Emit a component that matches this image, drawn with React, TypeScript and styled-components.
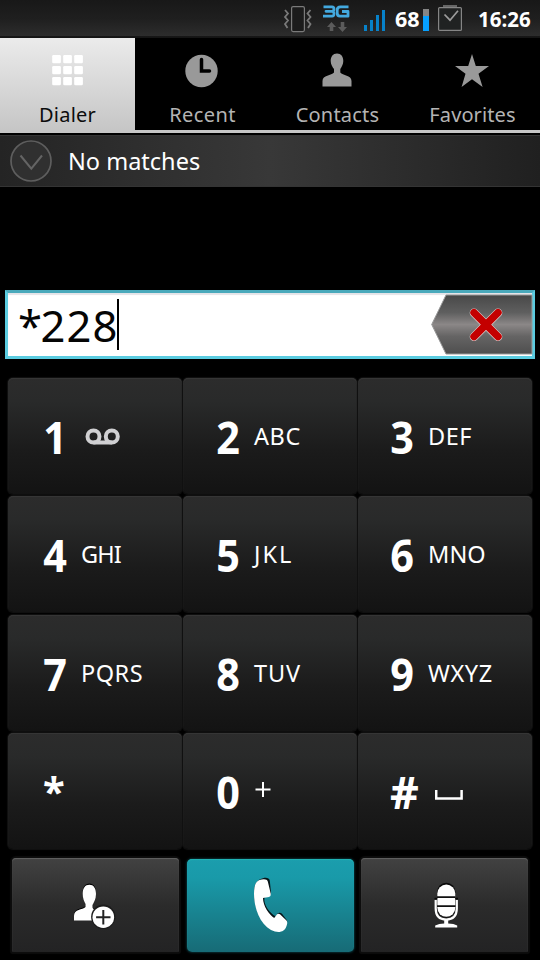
import React from 'react';
import styled, { createGlobalStyle } from 'styled-components';

const Global = createGlobalStyle`
  * { box-sizing: border-box; }
  html, body { margin: 0; padding: 0; background: #000; }
  body { font-family: "Noto Sans", "Open Sans", sans-serif; }
  button { font-family: inherit; }
`;

const Screen = styled.div`
  width: 540px;
  height: 960px;
  overflow: hidden;
  background: #000;
  display: flex;
  flex-direction: column;
`;

const StatusBar = styled.header`
  height: 38px;
  flex: none;
  display: flex;
  align-items: flex-start;
  justify-content: flex-end;
  padding-right: 8px;
  background: linear-gradient(#181818, #1f1f1f 50%, #2d2d2d 36px, #000 37px, #2a2a2a 38px);
`;

const StatusIcon = styled.svg<{ $gap: number }>`
  display: block;
  flex: none;
  margin-right: ${(p) => p.$gap}px;
`;

const StatusText = styled.span<{ $width: number; $size: number; $spacing: number }>`
  width: ${(p) => p.$width}px;
  font-size: ${(p) => p.$size}px;
  letter-spacing: ${(p) => p.$spacing}px;
  font-weight: 700;
  line-height: 38px;
  white-space: nowrap;
  color: #fff;
`;

const Tabs = styled.nav`
  height: 95px;
  flex: none;
  display: grid;
  grid-template-columns: repeat(4, 135px);
`;

const Tab = styled.button<{ $active?: boolean }>`
  border: 0;
  padding: 0;
  display: flex;
  flex-direction: column;
  align-items: center;
  border-bottom: 3px solid #c6c6c6;
  background: ${(p) => (p.$active ? 'linear-gradient(#ebebeb, #c6c6c6)' : '#000')};
  color: ${(p) => (p.$active ? '#0c0c0c' : '#b4b4b4')};
`;

const TabIcon = styled.svg`
  display: block;
  margin-top: 12px;
  flex: none;
`;

const TabLabel = styled.span<{ $spacing: number }>`
  font-size: 20px;
  line-height: 26px;
  margin-top: 12px;
  letter-spacing: ${(p) => p.$spacing}px;
`;

const MatchBar = styled.section`
  height: 52px;
  margin-top: 2px;
  flex: none;
  display: flex;
  align-items: center;
  padding-left: 10px;
  border-top: 1px solid #343434;
  border-bottom: 1px solid #343434;
  background: linear-gradient(90deg, #242424, #383838 50%, #202020);
`;

const MatchText = styled.span`
  margin-left: 16px;
  color: #fff;
  font-size: 23.5px;
  line-height: 30px;
`;

const NumberField = styled.div`
  width: 530px;
  height: 69px;
  margin: 103px 0 0 5px;
  flex: none;
  display: flex;
  align-items: center;
  justify-content: space-between;
  border: 3px solid #5bcce0;
  border-top-color: #4aa9bb;
  background: #fff;
  box-shadow: inset 0 2px 1px #e4e4e8;
`;

const NumberText = styled.div`
  display: flex;
  align-items: center;
  padding-left: 10px;
  font-size: 43.5px;
  letter-spacing: 1.2px;
  line-height: 60px;
  color: #050505;
`;

const Star = styled.span`
  letter-spacing: -1.6px;
`;

const Caret = styled.span`
  width: 2px;
  height: 51px;
  margin-left: -1.5px;
  margin-top: 0;
  background: #000;
`;

const Backspace = styled.svg`
  display: block;
  margin-right: -1px;
`;

const Keypad = styled.main`
  width: 524px;
  margin: 19px 0 0 8px;
  flex: none;
  display: grid;
  grid-template-columns: repeat(3, 174px);
  grid-template-rows: repeat(4, 116px);
  column-gap: 1px;
  row-gap: 2.4px;
`;

const Key = styled.button<{ $pad: number }>`
  border: 0;
  padding: 0 0 0 ${(p) => p.$pad}px;
  display: flex;
  align-items: center;
  border-radius: 5px;
  background: linear-gradient(#2c2c2c, #292a2a 20%, #1b1b1b 62%, #131313);
  box-shadow: inset 0 1px 1px #373737, 0 0 1px 1px #111;
  color: #fff;
  text-align: left;
`;

const Digit = styled.span<{ $narrow: number }>`
  width: 38px;
  flex: none;
  font-size: 45.5px;
  font-weight: 700;
  line-height: 60px;
  transform: scaleX(${(p) => p.$narrow});
  transform-origin: 3px 50%;
`;

const Asterisk = styled.span`
  width: 38px;
  flex: none;
  font-size: 40px;
  font-weight: 700;
  line-height: 60px;
`;

const Letters = styled.span<{ $spacing?: number }>`
  font-size: 23.5px;
  line-height: 32px;
  letter-spacing: ${(p) => p.$spacing ?? 0}px;
`;

const KeySymbol = styled.svg<{ $top?: number; $left?: number }>`
  display: block;
  margin-top: ${(p) => p.$top ?? 0}px;
  margin-left: ${(p) => p.$left ?? 0}px;
`;

const Actions = styled.footer`
  display: flex;
  gap: 7.5px;
  margin: 9px 0 0 12px;
  flex: none;
`;

const Action = styled.button<{ $call?: boolean }>`
  width: 167px;
  height: ${(p) => (p.$call ? 93 : 94)}px;
  margin-top: ${(p) => (p.$call ? 1 : 0)}px;
  padding: 0;
  border: 0;
  border-radius: ${(p) => (p.$call ? '5px' : '4px 4px 1px 1px')};
  display: flex;
  justify-content: center;
  background: ${(p) =>
    p.$call
      ? 'linear-gradient(#1b9dad, #199aa9 20%, #176b76)'
      : 'linear-gradient(#424242, #2b2b2b 50%, #232324)'};
  box-shadow: ${(p) =>
    p.$call ? 'inset 0 1px 1px #20b5b5, 0 0 2px 1px #092b30' : 'inset 0 1px 1px #626262, 0 0 1px 2px #0d0d0d'};
`;

const ActionIcon = styled.svg`
  display: block;
`;

const keys: { digit: string; letters?: string; spacing?: number }[] = [
  { digit: '1' }, { digit: '2', letters: 'ABC', spacing: 0.6 }, { digit: '3', letters: 'DEF', spacing: 0.5 },
  { digit: '4', letters: 'GHI', spacing: -0.9 }, { digit: '5', letters: 'JKL', spacing: 2 }, { digit: '6', letters: 'MNO', spacing: 0.1 },
  { digit: '7', letters: 'PQRS', spacing: 0.5 }, { digit: '8', letters: 'TUV', spacing: 0.9 }, { digit: '9', letters: 'WXYZ', spacing: 0.6 },
  { digit: '*' }, { digit: '0' }, { digit: '#' },
];

const columnPad = [35, 33, 32];

function KeyExtra({ digit }: { digit: string }) {
  if (digit === '1') {
    return (
      <KeySymbol width="36" height="18" viewBox="0 0 36 18" $left={4} $top={1}>
        <g fill="none" stroke="#d0d0d2" strokeWidth="4">
          <circle cx="8.5" cy="8.5" r="6" />
          <circle cx="26.8" cy="8.5" r="6" />
          <path d="M8.5 14.5H26.8" />
        </g>
      </KeySymbol>
    );
  }
  if (digit === '0') {
    return (
      <KeySymbol width="16" height="16" viewBox="0 0 16 16" $left={0.5} $top={-4}>
        <path d="M8 1V16M.5 8.5H15.5" stroke="#fff" strokeWidth="2" />
      </KeySymbol>
    );
  }
  if (digit === '#') {
    return (
      <KeySymbol width="28" height="10" viewBox="0 0 28 10" $left={7} $top={7}>
        <path d="M1.2 0V8.5H26.6V0" fill="none" stroke="#fff" strokeWidth="2.5" />
      </KeySymbol>
    );
  }
  return null;
}

export default function App() {
  return (
    <Screen>
      <Global />
      <StatusBar>
        <StatusIcon width="30" height="38" viewBox="0 0 30 38" $gap={9} fill="none">
          <rect x="8.6" y="6.6" width="12.8" height="25" rx="1.5" fill="#1b1b1b" stroke="#7a7a7a" strokeWidth="1.2" />
          <path d="M2 10L5 13.5 2 17 5 20.5 2 24 4.5 28M27.5 10L24.5 13.5 27.5 17 24.5 20.5 27.5 24 25 28" stroke="#7a7a7a" strokeWidth="1.8" />
        </StatusIcon>
        <StatusIcon width="28" height="38" viewBox="0 0 28 38" $gap={14} fill="none">
          <g stroke="#43a9df" strokeWidth="2.8" strokeLinejoin="round">
            <path d="M1.5 6.8H10Q12 6.8 12 9T10 11.3H4H10Q12 11.3 12 13.8T10 16.2H1" />
            <path d="M26.5 6.8H18.5Q15.2 6.8 15.2 10V13Q15.2 16.2 18 16.2H26V11.5H20" />
          </g>
          <path d="M9.5 22L14 27H11.3V31H7.7V27H5ZM20.5 32L16 27H18.7V22H22.3V27H25Z" fill="#5b5b5b" />
        </StatusIcon>
        <StatusIcon width="22" height="38" viewBox="0 0 22 38" $gap={9} fill="#0782ca">
          <rect x="0" y="25" width="3" height="6" />
          <rect x="6" y="20" width="3" height="11" />
          <rect x="12" y="15" width="3" height="16" />
          <rect x="18" y="10" width="3" height="21" />
        </StatusIcon>
        <StatusText $width={28} $size={21.5} $spacing={0}>68</StatusText>
        <StatusIcon width="6" height="38" viewBox="0 0 6 38" $gap={9}>
          <rect y="9" width="6" height="7" fill="#858585" />
          <rect y="16" width="6" height="15" fill="#06a0ff" />
        </StatusIcon>
        <StatusIcon width="24" height="38" viewBox="0 0 24 38" $gap={16} fill="none">
          <rect x="5" y="5" width="14" height="2" fill="#666" />
          <rect x=".6" y="7.6" width="22.8" height="22.8" rx="1" fill="#202222" stroke="#858585" strokeWidth="1.2" />
          <path d="M6.5 14.5L12 20.2 20 10.8" stroke="#9c9c9c" strokeWidth="1.7" />
        </StatusIcon>
        <StatusText $width={54} $size={20.5} $spacing={0}>16:26</StatusText>
      </StatusBar>

      <Tabs>
        <Tab $active>
          <TabIcon width="40" height="40" viewBox="0 0 40 40" fill="#fff">
            {[5, 16, 27].map((y) => [4.2, 15.2, 26.2].map((x) => (
              <rect key={`${x}-${y}`} x={x} y={y} width="8.7" height="8.3" rx="1.3" />
            )))}
          </TabIcon>
          <TabLabel $spacing={0.2}>Dialer</TabLabel>
        </Tab>
        <Tab>
          <TabIcon width="40" height="40" viewBox="0 0 40 40">
            <circle cx="18.5" cy="21" r="16.2" fill="#999" />
            <path d="M18.5 9.5V21H26.5" fill="none" stroke="#000" strokeWidth="3.5" strokeLinecap="round" />
          </TabIcon>
          <TabLabel $spacing={0.4}>Recent</TabLabel>
        </Tab>
        <Tab>
          <TabIcon width="40" height="40" viewBox="0 0 40 40" fill="#999">
            <path d="M19 3.5C23 3.5 25.3 6.5 25.3 11C25.3 14.5 23.5 17 22.3 19V22.5C24.5 25.5 33.5 25 33.5 31V36.5H4.5V31C4.5 25 13.5 25.5 16 22.5V19C14.5 17 12.7 14.5 12.7 11C12.7 6.5 15 3.5 19 3.5Z" />
          </TabIcon>
          <TabLabel $spacing={0.2}>Contacts</TabLabel>
        </Tab>
        <Tab>
          <TabIcon width="40" height="40" viewBox="0 0 40 40" fill="#999">
            <path d="M19 4L22.8 16H36L25.5 23.8 29.6 37 19 29.2 8.6 37 12.5 23.8 2 16H15.2Z" />
          </TabIcon>
          <TabLabel $spacing={0.1}>Favorites</TabLabel>
        </Tab>
      </Tabs>

      <MatchBar>
        <svg width="42" height="42" viewBox="0 0 42 42" fill="none">
          <circle cx="21" cy="21" r="20" fill="#303030" stroke="#5e5e5e" strokeWidth="1.7" />
          <path d="M10.5 15.5L21.3 28.7 32 15.5" stroke="#646464" strokeWidth="2" />
        </svg>
        <MatchText>No matches</MatchText>
      </MatchBar>

      <NumberField>
        <NumberText><Star>*</Star>228<Caret /></NumberText>
        <Backspace width="102" height="61" viewBox="0 0 102 61">
          <defs>
            <linearGradient id="metal" x1="0" y1="0" x2="0" y2="1">
              <stop offset="0" stopColor="#484848" />
              <stop offset=".3" stopColor="#5f5f5f" />
              <stop offset=".5" stopColor="#8b8787" />
              <stop offset=".7" stopColor="#656464" />
              <stop offset="1" stopColor="#4e4e4e" />
            </linearGradient>
          </defs>
          <path d="M15 1H101V60H15L.7 30.5Z" fill="url(#metal)" stroke="#999" strokeWidth="1" />
          <path d="M43 18.7L67 42.7M67 18.7L43 42.7" stroke="#ddd" strokeWidth="8.6" strokeLinecap="round" />
          <path d="M43 18.7L67 42.7M67 18.7L43 42.7" stroke="#c40000" strokeWidth="7.4" strokeLinecap="round" />
        </Backspace>
      </NumberField>

      <Keypad>
        {keys.map((key, i) => (
          <Key key={key.digit} $pad={columnPad[i % 3]}>
            {key.digit === '*' ? <Asterisk>*</Asterisk> : <Digit $narrow={key.digit === '#' ? 0.98 : 0.91}>{key.digit}</Digit>}
            {key.letters ? <Letters $spacing={key.spacing}>{key.letters}</Letters> : <KeyExtra digit={key.digit} />}
          </Key>
        ))}
      </Keypad>

      <Actions>
        <Action>
          <ActionIcon width="167" height="94" viewBox="0 0 167 94">
            <path d="M77.5 25.5C81.5 25.5 84 29 84 35C84 40 82 43 80.5 46V49C82 54 90 51 90 62H62V57C62 50 70.5 51 73.5 48V45C72 42 70.7 39 70.7 35C70.7 29 73 25.5 77.5 25.5Z" fill="#000" />
            <path d="M77.5 26.7C81.5 26.7 84 30 84 36C84 41 82 44 80.5 47V49.5C82 54 90 53 90 62.5H62V58C62 51 70.5 52 73.5 49V46C72 43 70.7 40 70.7 36C70.7 30 73 26.7 77.5 26.7Z" fill="#fff" />
            <circle cx="91.3" cy="58.8" r="12.2" fill="#1c1c1c" />
            <circle cx="91.3" cy="59.2" r="10.8" fill="#fff" />
            <path d="M91.3 52V66.5M84.1 59.3H98.5" stroke="#222" strokeWidth="2" />
          </ActionIcon>
        </Action>
        <Action $call>
          <ActionIcon width="167" height="93" viewBox="0 0 167 93">
            <path transform="translate(0 -1.3)" d="M76 20.5C79 19.8 82.3 20 82.8 23L84 35Q84 37 82 38L77.5 39.7C76 47 83 55.5 88.5 58.5L91 55.5Q93 54.5 95 56L99.5 62Q101 64 99 67C96.5 74 92 75 84 71C73 65 67 49 67 35C67 27 69.5 22 76 20.5Z" fill="#071316" />
            <path d="M72.5 21C76 19.8 80.3 19.7 80.8 22.5L83.8 35Q84 37.5 82 38L76 39C76 47 82 55.5 87.2 59L90 55.2Q91.5 54.2 93 55.2L99.5 61.5Q101 63.5 99.5 67C97.5 73.5 91 74.5 84 71C73 65 67 49 67 35C67 27 68.5 22.5 72.5 21Z" fill="#fff" />
          </ActionIcon>
        </Action>
        <Action>
          <ActionIcon width="167" height="94" viewBox="0 0 167 94">
            <rect x="76" y="24.8" width="18.5" height="35" rx="9.2" fill="#080808" />
            <path d="M74.7 42V50.5Q74.7 61.5 85.2 61.5T95.8 50.5V42" fill="none" stroke="#fff" strokeWidth="2.2" />
            <rect x="76.3" y="26.5" width="18" height="32.3" rx="9" fill="#fff" />
            <path d="M76 39.2H94.5M76 48.2H94.5" stroke="#111" strokeWidth="1.8" />
            <path d="M73.5 40.5H76.2M94.3 40.5H97" stroke="#080808" strokeWidth="1.3" />
            <path d="M83.2 61H87.2V65.5Q93 65.5 96.2 67.5V69.5H74.2V67.5Q78 65.5 83.2 65.5Z" fill="#fff" />
          </ActionIcon>
        </Action>
      </Actions>
    </Screen>
  );
}
